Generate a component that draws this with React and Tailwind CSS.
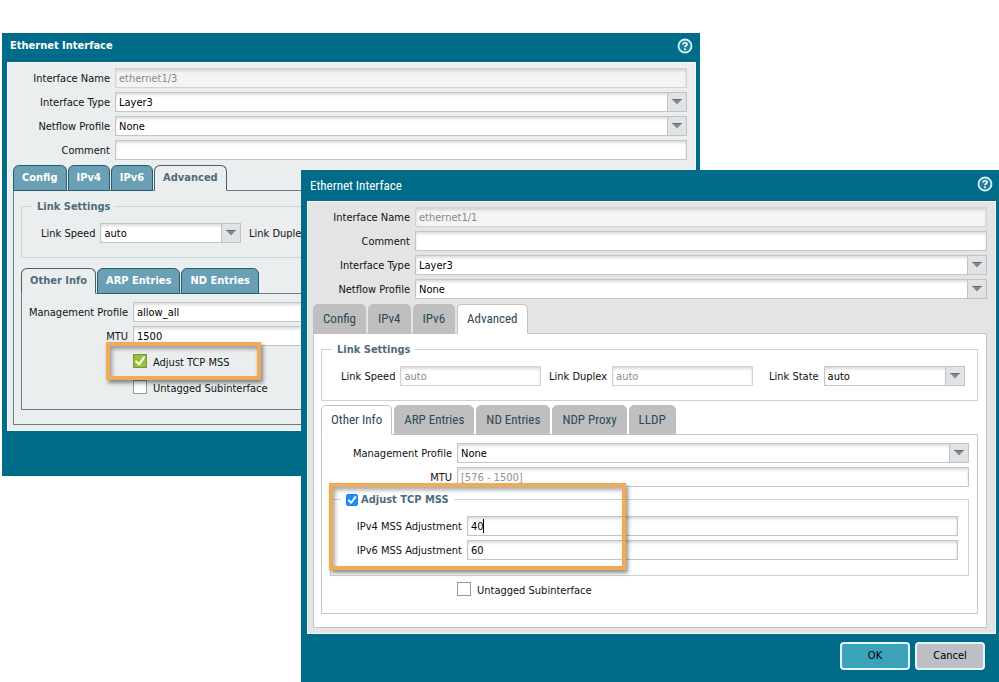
import { createContext, useContext, useId } from 'react';
import clsx from 'clsx';

// "classic" is the older skin with bold teal tabs, "modern" the flat grey one
const Skin = createContext('modern');

const fieldBase =
  'h-5 w-full min-w-0 rounded-none border border-[#c3c6c7] px-[3px] pt-px text-[11px] leading-4 text-black shadow-[inset_0_2px_3px_rgba(0,0,0,0.14)] outline-none';

/* ── Form controls ─────────────────────────────────── */

const TextField = ({ id, value, disabled, placeholder, active, muted }) => (
  <div className="relative flex min-w-0 flex-1">
    <input
      id={id}
      type="text"
      defaultValue={value}
      disabled={disabled}
      placeholder={placeholder}
      className={clsx(
        fieldBase,
        'placeholder:text-[#8b959d] disabled:border-[#d0d2d3] disabled:text-[#8a8a8a]',
        muted ? 'bg-[#f4f4f4]' : 'bg-white',
        active && 'border-[#9a9a9a]'
      )}
    />
    {active && <span className="pointer-events-none absolute top-[3px] left-4 h-[14px] w-px bg-black" />}
  </div>
);

const SelectField = ({ id, value }) => (
  <div className="relative flex min-w-0 flex-1">
    <select id={id} defaultValue={value} className={clsx(fieldBase, 'appearance-none bg-white pr-6')}>
      <option>{value}</option>
    </select>
    <span className="pointer-events-none absolute inset-y-0 right-0 flex w-5 items-center justify-center border border-[#bfc3c6] bg-[#e0e2e4]">
      <svg viewBox="0 0 10 6" className="h-[6px] w-[10px]">
        <path d="M0 0H10L5 5.5Z" fill="#7b8a93" />
        <path d="M0 0H10L9.2 1H0.8Z" fill="#5f6d76" />
      </svg>
    </span>
  </div>
);

const Field = ({ label, labelClass, className, select, ...rest }) => {
  const id = useId();
  const Control = select ? SelectField : TextField;
  return (
    <div className={clsx('flex h-5 items-center gap-[5px]', className)}>
      <label htmlFor={id} className={clsx('shrink-0 pt-[2px] text-right text-[11px] leading-4 whitespace-nowrap text-[#111]', labelClass)}>
        {label}
      </label>
      <Control id={id} {...rest} />
    </div>
  );
};

const Tick = ({ className }) => (
  <svg viewBox="0 0 12 12" className={clsx('pointer-events-none absolute inset-0 h-full w-full', className)}>
    <path d="M2.8 6.4L5.2 8.8L9.4 3" fill="none" stroke="#fff" strokeWidth="1.8" strokeLinecap="round" strokeLinejoin="round" />
  </svg>
);

const Checkbox = ({ label, checked, className }) => {
  const id = useId();
  return (
    <div className={clsx('flex h-[14px] items-center gap-[6px]', className)}>
      <span className="relative flex h-[14px] w-[14px] shrink-0">
        <input
          id={id}
          type="checkbox"
          defaultChecked={checked}
          className="peer h-[14px] w-[14px] appearance-none border border-[#8b9a9c] bg-white checked:border-[#7b8f55] checked:bg-[#94c62b]"
        />
        <Tick className="hidden peer-checked:block" />
      </span>
      <label htmlFor={id} className="pt-1 text-[11px] leading-4 whitespace-nowrap text-[#111]">
        {label}
      </label>
    </div>
  );
};

/* ── Containers ────────────────────────────────────── */

const Group = ({ legend, className, children }) => (
  <fieldset className={clsx('min-w-0 border border-[#cdd1d3]', className)}>
    <legend className="ml-[10px] flex h-4 items-center px-[5px] pt-[2px] text-[11px] leading-4 font-bold text-[#4f6b7c]">{legend}</legend>
    {children}
  </fieldset>
);

const Tabs = ({ items, selected, className }) => {
  const classic = useContext(Skin) === 'classic';
  return (
    <div role="tablist" className={clsx('relative flex', classic ? 'gap-px' : 'gap-[2px]', className)}>
      {items.map((item) => {
        const on = item === selected;
        return (
          <button
            key={item}
            type="button"
            role="tab"
            aria-selected={on}
            className={clsx(
              'whitespace-nowrap',
              classic && 'h-[26px] rounded-t-[6px] border px-2 text-[11px] leading-4 font-bold',
              classic && on && 'border-[#48606c] border-b-[#eaeeee] bg-[#eaeeee] text-[#4f6b7c]',
              classic && !on && 'border-[#2c5b6e] bg-[#69a0b5] text-white',
              !classic && "h-[30px] rounded-t-[5px] border px-[9px] font-['Roboto_Condensed',sans-serif] text-[13px] leading-4 text-[#2b4a57]",
              !classic && on && 'border-[#c4c4c4] border-b-white bg-white',
              !classic && !on && 'border-[#bfbfbf] bg-[#bfbfbf]'
            )}
          >
            {item}
          </button>
        );
      })}
    </div>
  );
};

const Panel = ({ className, children }) => {
  const classic = useContext(Skin) === 'classic';
  return (
    <div className={clsx('-mt-px border', classic ? 'border-[#6d7f88] bg-[#eaeeee]' : 'border-[#c4c7c8] bg-white', className)}>
      {children}
    </div>
  );
};

// Orange marker drawn over the settings being pointed out
const Marker = ({ className }) => (
  <div className={clsx('pointer-events-none absolute z-10 border-4 border-[#efab57] shadow-[2px_3px_4px_rgba(0,0,0,0.45),inset_2px_3px_4px_rgba(0,0,0,0.35)]', className)} />
);

const HelpIcon = () => (
  <svg viewBox="0 0 16 16" className="h-4 w-4">
    <circle cx="8" cy="8" r="6.5" fill="#1b7f9b" stroke="#d5f2fa" strokeWidth="1.8" />
    <path d="M6 6.6C6 4.2 10 4.2 10 6.4C10 7.8 8 7.7 8 9.2" fill="none" stroke="#fff" strokeWidth="1.7" />
    <circle cx="8" cy="11.2" r="1" fill="#fff" />
  </svg>
);

const Dialog = ({ skin, className, footer, children }) => {
  const classic = skin === 'classic';
  return (
    <Skin.Provider value={skin}>
      <section className={clsx('col-start-1 row-start-1 self-start bg-[#006c89]', className)}>
        <header className={clsx('flex items-center justify-between pb-[3px] pl-2 text-white', classic ? 'h-[29px] pr-[7px]' : 'h-[31px] pr-[6px]')}>
          <h2
            className={clsx(
              'leading-4',
              classic ? 'text-[11px] font-bold' : "pl-px pt-1 font-['Roboto_Condensed',sans-serif] text-[13px]"
            )}
          >
            Ethernet Interface
          </h2>
          <button type="button" aria-label="Help">
            <HelpIcon />
          </button>
        </header>
        <div
          className={clsx(
            'border pt-[5px] pr-2 pb-[5px] pl-[5px]',
            classic ? 'mr-1 ml-[5px] border-[#f3fbfd] bg-[#eaeeee]' : 'mr-[3px] ml-[6px] border-[#eef7fa] bg-[#e4e4e4]'
          )}
        >
          {children}
        </div>
        {footer}
      </section>
    </Skin.Provider>
  );
};

/* ── Dialogs ───────────────────────────────────────── */

const ClassicDialog = () => (
  <Dialog skin="classic" className="mt-[33px] mr-[299px] ml-[2px]" footer={<div className="h-[45px]" />}>
    <div className="mb-[5px] flex flex-col gap-1">
      <Field label="Interface Name" labelClass="w-[97px]" value="ethernet1/3" disabled muted />
      <Field label="Interface Type" labelClass="w-[97px]" value="Layer3" select />
      <Field label="Netflow Profile" labelClass="w-[97px]" value="None" select />
      <Field label="Comment" labelClass="w-[97px]" />
    </div>

    <Tabs items={['Config', 'IPv4', 'IPv6', 'Advanced']} selected="Advanced" />
    <Panel className="px-[7px] pt-[7px] pb-[14px]">
      <Group legend="Link Settings" className="pt-[9px] pb-[14px]">
        <div className="flex gap-2 pl-[19px]">
          <Field label="Link Speed" value="auto" select className="w-[200px]" />
          <Field label="Link Duplex" value="auto" select className="w-[204px]" />
        </div>
      </Group>

      <Tabs items={['Other Info', 'ARP Entries', 'ND Entries']} selected="Other Info" className="mt-[10px]" />
      <Panel className="pt-2 pr-2 pb-[15px]">
        <div className="flex flex-col gap-1">
          <Field label="Management Profile" labelClass="w-[106px]" value="allow_all" select />
          <Field label="MTU" labelClass="w-[106px]" value="1500" />
        </div>
        <div className="relative mt-2 ml-[111px] w-[120px]">
          <Checkbox label="Adjust TCP MSS" checked />
          <Marker className="-inset-y-3 -right-2 -left-[27px]" />
        </div>
        <Checkbox label="Untagged Subinterface" className="mt-3 ml-[111px]" />
      </Panel>
    </Panel>
  </Dialog>
);

const dialogButton = 'h-7 w-[70px] rounded-[4px] border-2 border-[#e6f8fc] text-[11px] leading-4 text-black';

const ModernFooter = () => (
  <footer className="flex justify-end gap-[5px] pt-2 pr-[14px] pb-3">
    <button type="button" className={clsx(dialogButton, 'bg-[#3aa3b9]')}>
      OK
    </button>
    <button type="button" className={clsx(dialogButton, 'bg-[#bcbfc6]')}>
      Cancel
    </button>
  </footer>
);

const MssLegend = () => (
  <>
    <span className="relative mr-[3px] flex h-3 w-3">
      <input
        id="mss-enabled"
        type="checkbox"
        defaultChecked
        className="peer h-3 w-3 appearance-none rounded-[2px] border border-[#8b8b8b] bg-white checked:border-[#1583ea] checked:bg-[#1e8ff5]"
      />
      <Tick className="hidden peer-checked:block" />
    </span>
    <label htmlFor="mss-enabled">Adjust TCP MSS</label>
  </>
);

const ModernDialog = () => (
  <Dialog skin="modern" className="z-10 mt-[170px] ml-[301px]" footer={<ModernFooter />}>
    <div className="mb-[5px] flex flex-col gap-1">
      <Field label="Interface Name" labelClass="w-[97px]" value="ethernet1/1" disabled muted />
      <Field label="Comment" labelClass="w-[97px]" />
      <Field label="Interface Type" labelClass="w-[97px]" value="Layer3" select />
      <Field label="Netflow Profile" labelClass="w-[97px]" value="None" select />
    </div>

    <Tabs items={['Config', 'IPv4', 'IPv6', 'Advanced']} selected="Advanced" />
    <Panel className="pt-[7px] pr-2 pb-[13px] pl-[7px]">
      <Group legend="Link Settings" className="pt-[9px] pr-3 pb-[14px]">
        <div className="flex justify-between pl-[19px]">
          <div className="flex gap-2">
            <Field label="Link Speed" value="auto" disabled className="w-[200px]" />
            <Field label="Link Duplex" value="auto" disabled className="w-[204px]" />
          </div>
          <Field label="Link State" value="auto" select className="w-[196px]" />
        </div>
      </Group>

      <Tabs items={['Other Info', 'ARP Entries', 'ND Entries', 'NDP Proxy', 'LLDP']} selected="Other Info" className="mt-1" />
      <Panel className="pt-2 pr-2 pb-[17px] pl-2">
        <div className="flex flex-col gap-1">
          <Field label="Management Profile" labelClass="w-[122px]" value="None" select />
          <Field label="MTU" labelClass="w-[122px]" placeholder="[576 - 1500]" />
        </div>
        <div className="relative mt-1">
          <Group legend={<MssLegend />} className="pt-[9px] pr-[10px] pb-[15px]">
            <div className="flex flex-col gap-1">
              <Field label="IPv4 MSS Adjustment" labelClass="w-[131px]" value="40" active />
              <Field label="IPv6 MSS Adjustment" labelClass="w-[131px]" value="60" />
            </div>
          </Group>
          <Marker className="-top-2 bottom-[6px] -left-px w-[297px]" />
        </div>
        <Checkbox label="Untagged Subinterface" className="mt-[6px] ml-[127px]" />
      </Panel>
    </Panel>
  </Dialog>
);

const App = () => {
  return (
    <main className="grid min-h-screen grid-cols-1 overflow-hidden bg-white font-['DejaVu_Sans_Condensed','Noto_Sans',sans-serif]">
      <ClassicDialog />
      <ModernDialog />
    </main>
  );
};

export default App;
